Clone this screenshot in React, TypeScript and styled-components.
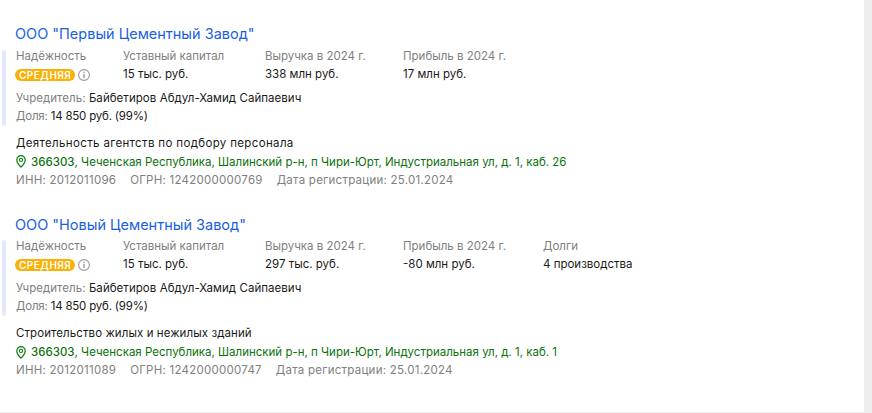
import styled, { createGlobalStyle } from 'styled-components';

const GlobalStyle = createGlobalStyle`
  html, body {
    margin: 0;
    height: 100%;
    background: #eeeeee;
    overflow: hidden;
  }
  body {
    font-family: Inter, "Noto Sans", sans-serif;
  }
`;

const companies = [
  {
    name: 'ООО "Первый Цементный Завод"',
    stats: [
      { label: 'Уставный капитал', value: '15 тыс. руб.', width: 142 },
      { label: 'Выручка в 2024 г.', value: '338 млн руб.', width: 138 },
      { label: 'Прибыль в 2024 г.', value: '17 млн руб.', width: 140 },
    ],
    activity: 'Деятельность агентств по подбору персонала',
    tracking: 0.35,
    address: ', Чеченская Республика, Шалинский р-н, п Чири-Юрт, Индустриальная ул, д. 1, каб. 26',
    inn: '2012011096',
    ogrn: '1242000000769',
  },
  {
    name: 'ООО "Новый Цементный Завод"',
    stats: [
      { label: 'Уставный капитал', value: '15 тыс. руб.', width: 142 },
      { label: 'Выручка в 2024 г.', value: '297 тыс. руб.', width: 138 },
      { label: 'Прибыль в 2024 г.', value: '-80 млн руб.', width: 140 },
      { label: 'Долги', value: '4 производства', width: 120 },
    ],
    activity: 'Строительство жилых и нежилых зданий',
    tracking: 0.08,
    address: ', Чеченская Республика, Шалинский р-н, п Чири-Юрт, Индустриальная ул, д. 1, каб. 1',
    inn: '2012011089',
    ogrn: '1242000000747',
  },
];

const App = () => (
  <>
    <GlobalStyle />
    <Panel>
      {companies.map((company) => (
        <Card key={company.inn}>
          <Title>{company.name}</Title>
          <Accented>
            <Stats>
              <Stat $width={107}>
                <Label>Надёжность</Label>
                <Rating>
                  <Badge>СРЕДНЯЯ</Badge>
                  <InfoIcon viewBox="0 0 12 12">
                    <circle cx="6" cy="6" r="5.4" fill="none" stroke="#9a9a9a" strokeWidth="1.1" />
                    <rect x="5.3" y="5" width="1.4" height="4" fill="#9a9a9a" />
                    <rect x="5.3" y="2.8" width="1.4" height="1.4" fill="#9a9a9a" />
                  </InfoIcon>
                </Rating>
              </Stat>
              {company.stats.map((stat) => (
                <Stat key={stat.label} $width={stat.width}>
                  <Label>{stat.label}</Label>
                  <div>{stat.value}</div>
                </Stat>
              ))}
            </Stats>
            <Founder>
              <Owner>
                <Muted>Учредитель: </Muted>Байбетиров Абдул-Хамид Сайпаевич
              </Owner>
              <Share>
                <Muted>Доля: </Muted>14 850 руб. (99%)
              </Share>
            </Founder>
          </Accented>
          <Activity $tracking={company.tracking}>{company.activity}</Activity>
          <Address>
            <PinIcon viewBox="0 0 10 13">
              <path
                d="M5 .7A4.2 4.2 0 0 0 .8 4.900C.8 7.800 5 12.100 5 12.100s4.200-4.300 4.200-7.200A4.200 4.200 0 0 0 5 .7z"
                fill="none"
                stroke="#0a7a0a"
                strokeWidth="1.200"
              />
              <circle cx="5" cy="4.900" r="1.600" fill="none" stroke="#0a7a0a" strokeWidth="1.100" />
            </PinIcon>
            <span>
              <Zip>366303</Zip>
              {company.address}
            </span>
          </Address>
          <Registry>
            <span>ИНН: {company.inn}</span>
            <span>ОГРН: {company.ogrn}</span>
            <span>Дата регистрации: 25.01.2024</span>
          </Registry>
        </Card>
      ))}
    </Panel>
  </>
);

export default App;

const Panel = styled.div`
  box-sizing: border-box;
  width: 864px;
  height: 412px;
  padding-top: 24.4px;
  background-color: #fff;
  color: #1a1a1a;
  font-size: 11.5px;
  line-height: 18px;
`;

const Card = styled.section`
  margin-bottom: 26.2px;
`;

const Title = styled.a`
  display: block;
  margin-left: 15px;
  color: #1a5fe0;
  font-size: 14.5px;
  line-height: 20px;
`;

const Accented = styled.div`
  position: relative;
  margin-top: 2.4px;
  padding-left: 16px;

  &::before {
    content: '';
    position: absolute;
    top: 3px;
    bottom: -1px;
    left: 2px;
    width: 4px;
    border-radius: 2px;
    background-color: #e5e8fb;
  }
`;

const Stats = styled.div`
  display: flex;
`;

const Stat = styled.div<{ $width: number }>`
  width: ${(p) => p.$width}px;
`;

const Label = styled.div`
  color: #808080;
`;

const Rating = styled.div`
  display: flex;
  align-items: center;
  gap: 3px;
  height: 18px;
  margin-top: 1px;
`;

const Badge = styled.span`
  margin-left: -1px;
  padding: 0 4px;
  border-radius: 7px;
  background-color: #fbb003;
  color: #fff;
  font-size: 10px;
  font-weight: 600;
  line-height: 12px;
  letter-spacing: 0.5px;
`;

const InfoIcon = styled.svg`
  width: 12px;
  height: 12px;
`;

const Founder = styled.div`
  margin-top: 5px;
`;

const Owner = styled.div`
  letter-spacing: 0.05px;
`;

const Share = styled.div`
  letter-spacing: -0.2px;
`;

const Muted = styled.span`
  color: #808080;
`;

const Activity = styled.div<{ $tracking: number }>`
  margin: 9px 0 0 16px;
  letter-spacing: ${(p) => p.$tracking}px;
`;

const Address = styled.div`
  display: flex;
  align-items: center;
  gap: 5px;
  margin: 1px 0 0 16px;
  color: #0c720c;
`;

const PinIcon = styled.svg`
  width: 10px;
  height: 13px;
`;

const Zip = styled.span`
  font-weight: 500;
`;

const Registry = styled.div`
  display: flex;
  gap: 14px;
  margin-left: 16px;
  color: #808080;
  letter-spacing: 0.25px;
`;
